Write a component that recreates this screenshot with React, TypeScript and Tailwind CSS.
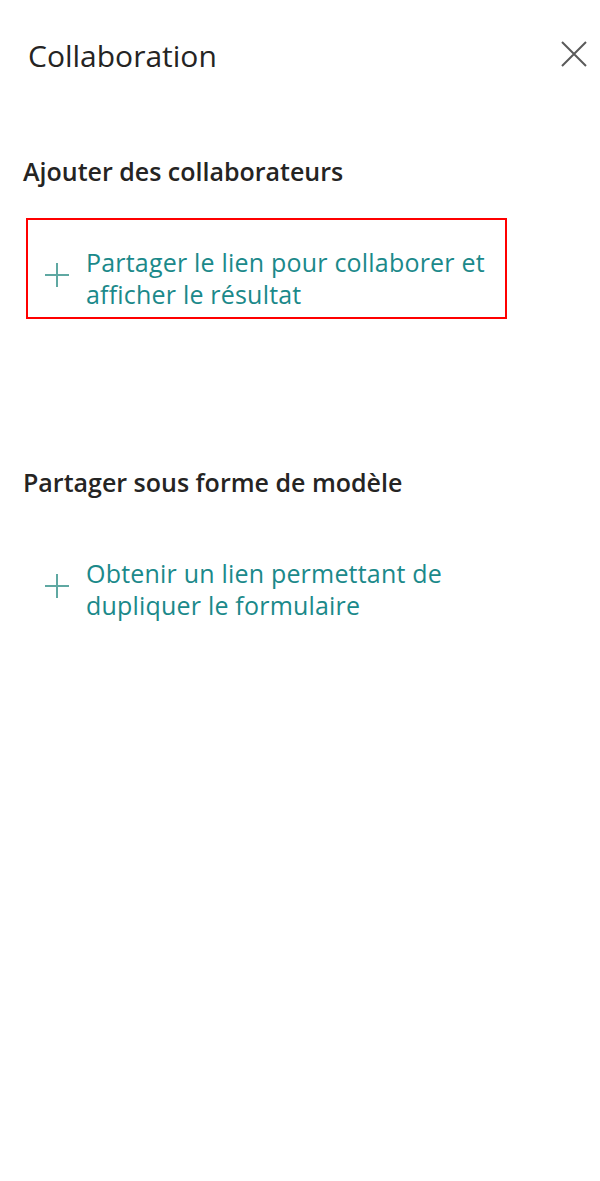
import React from 'react';

const font = { fontFamily: '"Open Sans", "Noto Sans", sans-serif' };

function PlusIcon() {
    return (
        <svg width="26" height="26" viewBox="0 0 26 26" className="shrink-0">
            <path d="M13 1 V25 M1 13 H25" stroke="#5fa8a2" strokeWidth="2" fill="none" />
        </svg>
    );
}

function ActionLink({ lines, boxed }: { lines: string[]; boxed?: boolean }) {
    return (
        <div className={boxed ? 'ml-[3px] w-[481px] h-[101px] border-2 border-[#ff0000] pt-[26px] pl-[16px]' : 'ml-[3px] w-[481px] h-[101px] border-2 border-transparent pt-[26px] pl-[16px]'}>
            <div className="flex items-start">
                <div className="pt-[16px]">
                    <PlusIcon />
                </div>
                <div className="ml-[16px] text-[25px] leading-[32px] text-[#1b898a] tracking-[0.2px] whitespace-nowrap">
                    {lines.map((l) => (
                        <div key={l}>{l}</div>
                    ))}
                </div>
            </div>
        </div>
    );
}

export default function App() {
    return (
        <div className="w-[600px] h-[1181px] bg-white relative" style={font}>
            <div className="flex items-start justify-between pl-[28px] pr-[13px] pt-[38px]">
                <h1 className="text-[30px] leading-[36px] text-[#252423]">Collaboration</h1>
                <svg width="26" height="26" viewBox="0 0 26 26" className="mt-[3px]">
                    <path d="M1 1 L25 25 M25 1 L1 25" stroke="#5a5a5a" strokeWidth="2" fill="none" />
                </svg>
            </div>

            <div className="pl-[23px] pt-[82px]">
                <h2 className="text-[25px] leading-[30px] font-semibold text-[#252423] whitespace-nowrap">Ajouter des collaborateurs</h2>
                <div className="mt-[32px]">
                    <ActionLink boxed lines={['Partager le lien pour collaborer et', 'afficher le résultat']} />
                </div>

                <h2 className="mt-[148px] text-[25px] leading-[30px] font-semibold text-[#252423] whitespace-nowrap">Partager sous forme de modèle</h2>
                <div className="mt-[32px]">
                    <ActionLink lines={['Obtenir un lien permettant de', 'dupliquer le formulaire']} />
                </div>
            </div>
        </div>
    );
}
